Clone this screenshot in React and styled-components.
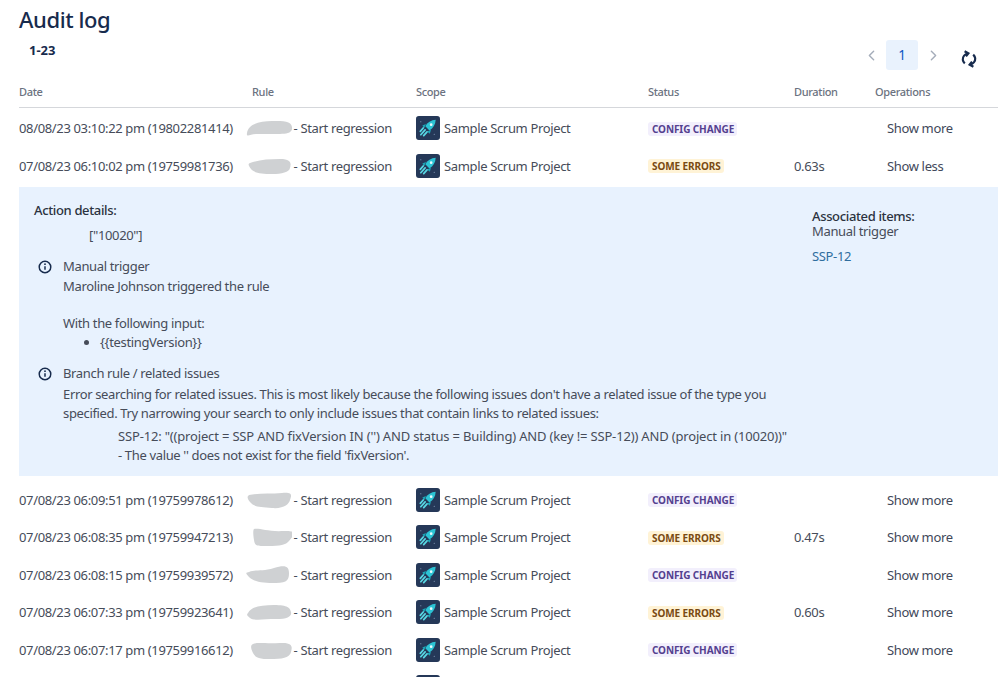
import React from 'react';
import styled, { createGlobalStyle } from 'styled-components';
import { ChevronLeft, ChevronRight } from 'lucide-react';

const GlobalStyle = createGlobalStyle`
	html, body {
		margin: 0;
		height: 677px;
		overflow: hidden;
		background: #fff;
	}
	body {
		font-family: "Noto Sans", "Open Sans", sans-serif;
		font-size: 13px;
		letter-spacing: -0.35px;
		color: #464c59;
	}
`;

const Page = styled.div`
	padding-left: 19px;
`;

const Title = styled.h1`
	margin: 0;
	padding-top: 4px;
	font-size: 22px;
	line-height: 31px;
	font-weight: 500;
	letter-spacing: -0.4px;
	color: #172b4d;
`;

const TopBar = styled.div`
	display: flex;
	justify-content: space-between;
	height: 49px;
`;

const Count = styled.div`
	padding: 6px 0 0 10px;
	font-size: 13px;
	line-height: 18px;
	font-weight: 700;
	letter-spacing: 0;
	color: #172b4d;
`;

const Pager = styled.div`
	display: flex;
	align-items: flex-start;
	padding: 5px 20px 0 0;
	color: #a5adba;
`;

const PageArrow = styled.span`
	display: flex;
	align-items: center;
	justify-content: center;
	width: 30px;
	height: 30px;
`;

const PageNumber = styled.span`
	width: 32px;
	height: 30px;
	border-radius: 3px;
	background: #e9f2fd;
	color: #0c56c4;
	font-size: 13.5px;
	line-height: 30px;
	text-align: center;
`;

const Refresh = styled.svg`
	width: 18px;
	height: 18px;
	margin: 10px 0 0 12px;
	color: #172b4d;
`;

const columns = '233px 164px 232px 146px 81px 1fr';

const HeaderRow = styled.div`
	display: grid;
	grid-template-columns: ${columns};
	height: 23px;
	margin-bottom: 1.5px;
	border-bottom: 1px solid #d5d7db;
	font-size: 11px;
	line-height: 16px;
	font-weight: 500;
	color: #6b7280;
`;

const Row = styled.div`
	display: grid;
	grid-template-columns: ${columns};
	align-items: center;
	height: 37.5px;
	white-space: nowrap;
`;

const RuleCell = styled.div`
	display: flex;
	align-items: center;
	justify-content: flex-end;
	padding-right: 24px;
	position: relative;
`;

const Blob = styled.svg`
	position: absolute;
	left: -6px;
	top: 50%;
	width: 46px;
	height: 20px;
	margin-top: -10px;
`;

const ScopeCell = styled.div`
	display: flex;
	align-items: center;
	gap: 4px;
`;

const Lozenge = styled.span`
	justify-self: start;
	margin-top: 1px;
	padding: 0 3px 0 4px;
	border-radius: 3px;
	font-size: 10px;
	line-height: 14px;
	font-weight: 700;
	letter-spacing: -0.1px;
	background: ${(p) => (p.$kind === 'error' ? '#fff3d6' : '#f2effc')};
	color: ${(p) => (p.$kind === 'error' ? '#7a4a12' : '#54408f')};
`;

const Operation = styled.div`
	padding-left: 12px;
	color: #42485a;
`;

const Details = styled.div`
	display: flex;
	justify-content: space-between;
	height: 289px;
	margin: 2.5px 0 5px;
	padding: 14px 0 0 15px;
	box-sizing: border-box;
	background: #e8f2fe;
	line-height: 19px;
`;

const DetailsMain = styled.div`
	width: 760px;
`;

const DetailsHead = styled.div`
	font-weight: 500;
	color: #2b3240;
`;

const ActionValue = styled.div`
	padding: 6px 0 0 55px;
`;

const LogEntry = styled.div`
	display: flex;
	gap: 11px;
	margin-top: ${(p) => p.$top}px;
`;

const InfoIcon = styled.svg`
	flex: none;
	width: 14px;
	height: 14px;
	margin: 3px 0 0 4px;
	color: #172b4d;
`;

const EntryTitle = styled.div`
	margin-bottom: ${(p) => p.$gap}px;
`;

const Spacer = styled.div`
	height: 18px;
`;

const InputList = styled.ul`
	margin: 0;
	padding-left: 37px;
`;

const IssueError = styled.div`
	padding: 4px 0 0 55px;
`;

const IssueQuery = styled.div`
	letter-spacing: -0.17px;
	white-space: nowrap;
`;

const Associated = styled.div`
	width: 186px;
	padding-top: 8px;
	line-height: 15px;
`;

const IssueLink = styled.div`
	margin-top: 10px;
	color: #2f6d9e;
`;

function RocketIcon() {
	return (
		<svg width="24" height="24" viewBox="0 0 25 25" style={{ flex: 'none' }}>
			<rect width="25" height="25" rx="3" fill="#253858" />
			<path d="M20.5 4c-4.8.3-8.6 2.8-10.8 6.6l4.3 4.4c4-2.2 6.2-6 6.5-11z" fill="#2cc3d4" />
			<circle cx="15.8" cy="9" r="1.4" fill="#e8fbff" />
			<path d="M10.4 8.4 6.6 9.8l2 2.8zM15.6 14.4l-1.2 4-2.8-2.2z" fill="#1ba6b8" />
			<path d="M9.5 14.5 5 19.5M11.5 16.5 8 20.5M7.5 12.5 4.5 16" stroke="#58d8e4" strokeWidth="1.8" strokeLinecap="round" />
			<circle cx="19" cy="19" r=".6" fill="#8da2c0" />
			<circle cx="5" cy="6" r=".6" fill="#8da2c0" />
		</svg>
	);
}

const blobs = [
	'M1 15C2 6 14 3 26 3S45 3 46 9 41 16 34 16 20 16 12 16 0 20 1 15z',
	'M4 7C12 4 22 3 34 3S45 8 44 12 36 18 26 18 8 17 5 13 2 8 4 7z',
	'M3 5C12 3 24 4 36 3S45 6 44 10 38 19 26 18 8 17 4 12 2 6 3 5z',
	'M8 2C14 1 22 5 38 4S46 10 43 14 34 19 22 19 9 19 8 13 7 3 8 2z',
	'M3 7C10 4 16 7 28 3S43 2 43 8 42 18 30 18 8 17 3 12 1 8 3 7z',
	'M2 11C5 5 14 3 28 3S44 6 45 10 42 17 30 17 8 19 4 16 1 12 2 11z',
	'M7 4C12 2 20 4 34 3S46 8 45 12 40 19 28 19 10 19 7 13 5 5 7 4z',
];

const rows = [
	{ date: '08/08/23 03:10:22 pm (19802281414)', status: 'config', op: 'Show more', blob: 0 },
	{ date: '07/08/23 06:10:02 pm (19759981736)', status: 'error', duration: '0.63s', op: 'Show less', blob: 1, open: true },
	{ date: '07/08/23 06:09:51 pm (19759978612)', status: 'config', op: 'Show more', blob: 2 },
	{ date: '07/08/23 06:08:35 pm (19759947213)', status: 'error', duration: '0.47s', op: 'Show more', blob: 3 },
	{ date: '07/08/23 06:08:15 pm (19759939572)', status: 'config', op: 'Show more', blob: 4 },
	{ date: '07/08/23 06:07:33 pm (19759923641)', status: 'error', duration: '0.60s', op: 'Show more', blob: 5 },
	{ date: '07/08/23 06:07:17 pm (19759916612)', status: 'config', op: 'Show more', blob: 6 },
];

function Info() {
	return (
		<InfoIcon viewBox="0 0 16 16" fill="none" stroke="currentColor" strokeWidth="1.7">
			<circle cx="8" cy="8" r="6.6" />
			<path d="M8 7.2v4" />
			<circle cx="8" cy="4.8" r="1" fill="currentColor" stroke="none" />
		</InfoIcon>
	);
}

function ActionDetails() {
	return (
		<Details>
			<DetailsMain>
				<DetailsHead>Action details:</DetailsHead>
				<ActionValue>["10020"]</ActionValue>
				<LogEntry $top={12}>
					<Info />
					<div>
						<EntryTitle $gap={1}>Manual trigger</EntryTitle>
						<div>Maroline Johnson triggered the rule</div>
						<Spacer />
						<div>With the following input:</div>
						<InputList><li>{'{{testingVersion}}'}</li></InputList>
					</div>
				</LogEntry>
				<LogEntry $top={12}>
					<Info />
					<div>
						<EntryTitle $gap={2}>Branch rule / related issues</EntryTitle>
						<div>Error searching for related issues. This is most likely because the following issues don't have a related issue of the type you specified. Try narrowing your search to only include issues that contain links to related issues:</div>
						<IssueError>
							<IssueQuery>SSP-12: "((project = SSP AND fixVersion IN ('') AND status = Building) AND (key != SSP-12)) AND (project in (10020))"</IssueQuery>
							<div>- The value '' does not exist for the field 'fixVersion'.</div>
						</IssueError>
					</div>
				</LogEntry>
			</DetailsMain>
			<Associated>
				<DetailsHead>Associated items:</DetailsHead>
				<div>Manual trigger</div>
				<IssueLink>SSP-12</IssueLink>
			</Associated>
		</Details>
	);
}

export default function App() {
	return (
		<Page>
			<GlobalStyle />
			<Title>Audit log</Title>
			<TopBar>
				<Count>1-23</Count>
				<Pager>
					<PageArrow><ChevronLeft size={17} /></PageArrow>
					<PageNumber>1</PageNumber>
					<PageArrow><ChevronRight size={17} /></PageArrow>
					<Refresh viewBox="0 0 18 18" fill="none" stroke="currentColor" strokeWidth="2.2">
						<path d="M8 3.5C5 4 2.4 6.6 2.8 9.8c.2 1.4.9 2.6 2 3.6" />
						<path d="M4.6 1.2 8.4 3.4 6 6.4" />
						<path d="M10 14.5c3-.5 5.6-3.1 5.2-6.3-.2-1.4-.9-2.6-2-3.6" />
						<path d="M13.4 16.8 9.6 14.6 12 11.6" />
					</Refresh>
				</Pager>
			</TopBar>
			<HeaderRow>
				<div>Date</div>
				<div>Rule</div>
				<div>Scope</div>
				<div>Status</div>
				<div>Duration</div>
				<div>Operations</div>
			</HeaderRow>
			{rows.map((row) => (
				<React.Fragment key={row.date}>
					<Row>
						<div>{row.date}</div>
						<RuleCell>
							- Start regression
							<Blob viewBox="0 0 46 20"><path d={blobs[row.blob]} fill="#cfd1d3" /></Blob>
						</RuleCell>
						<ScopeCell><RocketIcon />Sample Scrum Project</ScopeCell>
						<Lozenge $kind={row.status}>{row.status === 'error' ? 'SOME ERRORS' : 'CONFIG CHANGE'}</Lozenge>
						<div>{row.duration}</div>
						<Operation>{row.op}</Operation>
					</Row>
					{row.open && <ActionDetails />}
				</React.Fragment>
			))}
			{/* next row is cut off by the window, only the top of its icon shows */}
			<Row>
				<div />
				<div />
				<ScopeCell><RocketIcon /></ScopeCell>
			</Row>
		</Page>
	);
}
